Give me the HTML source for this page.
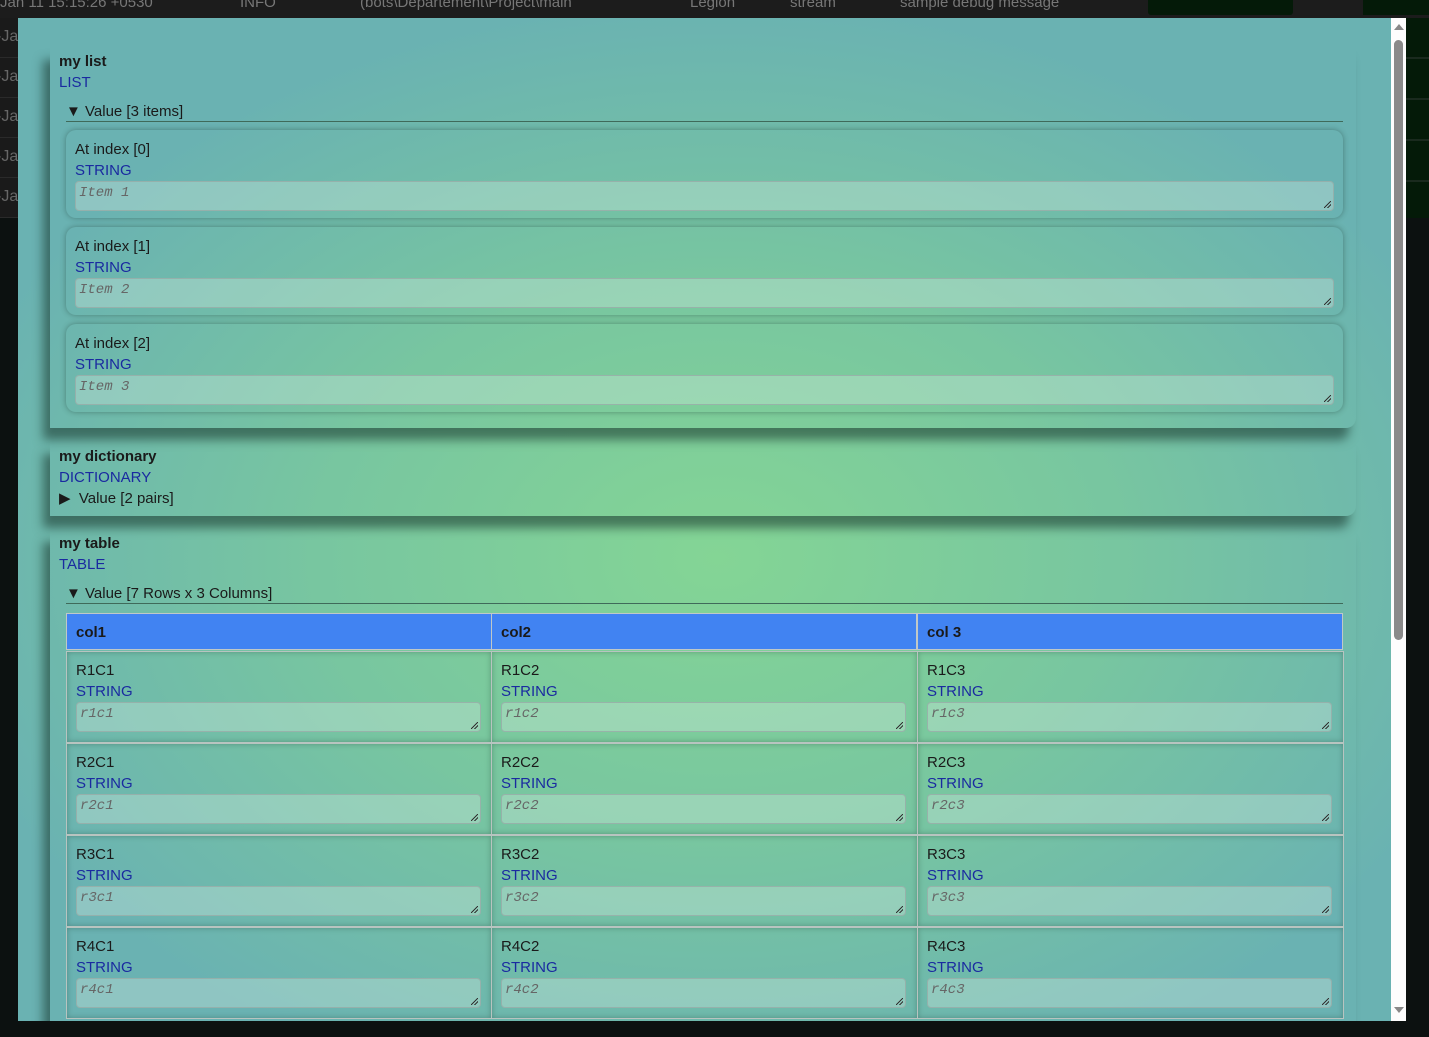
<!DOCTYPE html>
<html><head><meta charset="utf-8"><style>
*{box-sizing:border-box;margin:0;padding:0}
body{width:1429px;height:1037px;background:#0c1110;font-family:"Liberation Sans",sans-serif;font-size:15px;color:#1a1a1a;position:relative;overflow:hidden}
.a{position:absolute}
#top{left:0;top:0;width:1429px;height:18px;background:#1c1c1c;color:#777;font-size:15px;line-height:15px;overflow:hidden;white-space:nowrap}
#left{left:0;top:18px;width:18px;height:200px;background:#1a1a1a;color:#666;overflow:hidden;white-space:nowrap;font-size:16px}
#left div{position:absolute;left:-4px;width:60px;height:40px;border-bottom:1px solid #2a2a2a;padding-top:10px}
#modal{left:18px;top:18px;width:1373px;height:1003px;overflow:hidden;background:radial-gradient(ellipse 800px 560px at 700px 540px,#84d595 0%,#78c6a0 50%,#6ab2b2 100%)}
#sb{left:1391px;top:18px;width:15px;height:1003px;background:#fdfdfd}
.card{position:absolute;left:32px;width:1306px;border-radius:0 0 10px 0;box-shadow:-7px 12px 10px rgba(20,50,40,.55)}
.t{position:absolute;white-space:nowrap;line-height:18px}
.b{font-weight:bold}
.blue{color:#1a2aa0}
.sum{border-bottom:1px solid #3f6a5a}
.item{position:absolute;border-radius:10px;box-shadow:0 0 6px rgba(30,60,50,.45)}
.ta{position:absolute;height:30px;border:1px solid rgba(150,170,165,.8);border-radius:4px;background:rgba(220,240,230,.32);font-family:"Liberation Mono",monospace;font-style:italic;color:#666;font-size:14px;padding:2px 3px;line-height:18px}
.ta:after{content:"";position:absolute;right:2px;bottom:2px;width:7px;height:7px;background:linear-gradient(135deg,transparent 45%,#333 45%,#333 55%,transparent 55%,transparent 70%,#333 70%,#333 80%,transparent 80%)}
.th{position:absolute;top:595px;height:37px;background:#4183f2;border:1px solid #c0c8c8;font-weight:bold;padding:10px 9px;line-height:18px}
.cell{position:absolute;height:92px;border:1px solid #b8c4c0;box-shadow:inset 0 0 6px rgba(30,60,50,.35)}
</style></head><body>
<div id="top" class="a"><span style="position:absolute;left:0;top:-5px">Jan 11 15:15:26 +0530</span><span style="position:absolute;left:240px;top:-5px">INFO</span><span style="position:absolute;left:360px;top:-5px">(bots\Departement\Project\main</span><span style="position:absolute;left:690px;top:-5px">Legion</span><span style="position:absolute;left:790px;top:-5px">stream</span><span style="position:absolute;left:900px;top:-5px">sample debug message</span><div style="position:absolute;left:1148px;top:0;width:145px;height:15px;background:#041a08;border-radius:0 0 3px 3px"></div><div style="position:absolute;left:1363px;top:0;width:66px;height:15px;background:#041a08"></div></div>
<div id="left" class="a"><div style="top:0">-Ja</div><div style="top:40px">-Ja</div><div style="top:80px">-Ja</div><div style="top:120px">-Ja</div><div style="top:160px">-Ja</div></div>
<div class="a" style="left:1406px;top:18px;width:23px;height:200px;background:#041a08;background-image:repeating-linear-gradient(180deg,transparent 0 39px,#1a2a1e 39px 41px)"></div>
<div id="modal" class="a">
 <div class="card" style="top:30px;height:380px"></div>
 <div class="card" style="top:424px;height:74px"></div>
 <div class="card" style="top:512px;height:600px"></div>
 <div class="t b" style="left:41px;top:35px">my list</div>
 <div class="t blue" style="left:41px;top:56px">LIST</div>
 <div class="t sum" style="left:48px;top:85px;width:1277px;height:19px">▼ Value [3 items]</div>
 <div class="item" style="left:48px;top:112px;width:1277px;height:88px"></div>
 <div class="t" style="left:57px;top:123px">At index [0]</div><div class="t blue" style="left:57px;top:144px">STRING</div><div class="ta" style="left:57px;top:163px;width:1259px">Item 1</div>
 <div class="item" style="left:48px;top:209px;width:1277px;height:88px"></div>
 <div class="t" style="left:57px;top:220px">At index [1]</div><div class="t blue" style="left:57px;top:241px">STRING</div><div class="ta" style="left:57px;top:260px;width:1259px">Item 2</div>
 <div class="item" style="left:48px;top:306px;width:1277px;height:88px"></div>
 <div class="t" style="left:57px;top:317px">At index [2]</div><div class="t blue" style="left:57px;top:338px">STRING</div><div class="ta" style="left:57px;top:357px;width:1259px">Item 3</div>
 <div class="t b" style="left:41px;top:430px">my dictionary</div>
 <div class="t blue" style="left:41px;top:451px">DICTIONARY</div>
 <div class="t" style="left:41px;top:472px">▶&nbsp; Value [2 pairs]</div>
 <div class="t b" style="left:41px;top:517px">my table</div>
 <div class="t blue" style="left:41px;top:538px">TABLE</div>
 <div class="t sum" style="left:48px;top:567px;width:1277px;height:19px">▼ Value [7 Rows x 3 Columns]</div>
 <div class="th" style="left:48px;width:426px">col1</div>
 <div class="th" style="left:473px;width:426px">col2</div>
 <div class="th" style="left:899px;width:426px">col 3</div>
 <div id="rows"></div>
</div>
<div id="sb" class="a"><div style="position:absolute;left:3px;top:6px;width:0;height:0;border-left:5px solid transparent;border-right:5px solid transparent;border-bottom:6px solid #888"></div><div style="position:absolute;left:3px;top:22px;width:9px;height:600px;background:#8a8a8a;border-radius:5px"></div><div style="position:absolute;left:3px;top:989px;width:0;height:0;border-left:5px solid transparent;border-right:5px solid transparent;border-top:6px solid #888"></div></div>
<div class="a" style="left:0;top:1021px;width:1429px;height:16px;background:#0c1110"></div>
<script>
var h='';var xs=[48,473,899];
for(var r=1;r<=4;r++){var y=633+(r-1)*92;for(var c=1;c<=3;c++){var x=xs[c-1];
h+='<div class="cell" style="left:'+x+'px;top:'+y+'px;width:'+(c==1?426:427)+'px"></div>';
h+='<div class="t" style="left:'+(x+10)+'px;top:'+(y+11)+'px">R'+r+'C'+c+'</div>';
h+='<div class="t blue" style="left:'+(x+10)+'px;top:'+(y+32)+'px">STRING</div>';
h+='<div class="ta" style="left:'+(x+10)+'px;top:'+(y+51)+'px;width:405px">r'+r+'c'+c+'</div>';}}
document.getElementById('rows').outerHTML=h;
</script>
</body></html>
